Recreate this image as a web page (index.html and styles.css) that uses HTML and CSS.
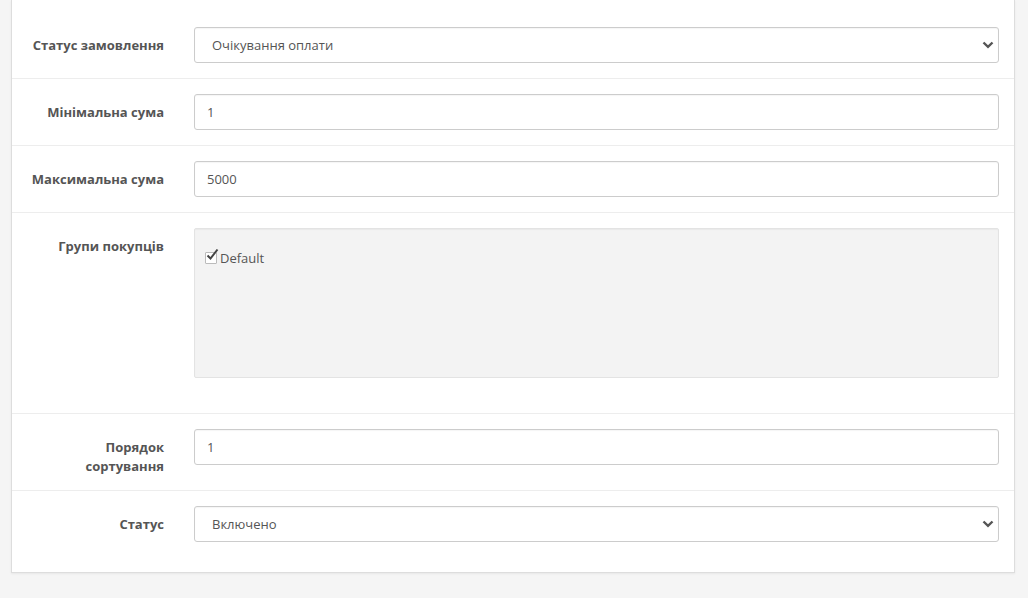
FILE: index.html
```html
<!DOCTYPE html>
<html lang="uk">
<head>
    <meta charset="UTF-8">
    <meta name="viewport" content="width=device-width, initial-scale=1.0">
    <title>Налаштування оплати</title>
    <link rel="stylesheet" href="styles.css">
</head>
<body>
    <div class="container">
        <div class="panel">
            <form class="form-horizontal">
                <div class="form-group">
                    <label class="control-label" for="order-status">Статус замовлення</label>
                    <div class="field select-wrap">
                        <select id="order-status" class="form-control">
                            <option>Очікування оплати</option>
                            <option>Обробка</option>
                            <option>Виконано</option>
                        </select>
                        <svg class="caret" width="12" height="8" viewBox="0 0 12 8"><path d="M1.5 1.5 L6 5.8 L10.5 1.5" fill="none" stroke="#555" stroke-width="2.4"/></svg>
                    </div>
                </div>
                <div class="form-group">
                    <label class="control-label" for="total-min">Мінімальна сума</label>
                    <div class="field">
                        <input type="text" id="total-min" class="form-control" value="1">
                    </div>
                </div>
                <div class="form-group">
                    <label class="control-label" for="total-max">Максимальна сума</label>
                    <div class="field">
                        <input type="text" id="total-max" class="form-control" value="5000">
                    </div>
                </div>
                <div class="form-group">
                    <label class="control-label">Групи покупців</label>
                    <div class="field">
                        <div class="well">
                            <div class="checkbox">
                                <label>
                                    <span class="check-box">
                                        <svg width="15" height="15" viewBox="0 0 15 15"><path d="M2.5 7.5 L5.5 10.5 L12.5 1.5" fill="none" stroke="#444" stroke-width="2"/></svg>
                                    </span>
                                    Default
                                </label>
                            </div>
                        </div>
                    </div>
                </div>
                <div class="form-group">
                    <label class="control-label" for="sort-order">Порядок<br>сортування</label>
                    <div class="field">
                        <input type="text" id="sort-order" class="form-control" value="1">
                    </div>
                </div>
                <div class="form-group">
                    <label class="control-label" for="status">Статус</label>
                    <div class="field select-wrap">
                        <select id="status" class="form-control">
                            <option>Включено</option>
                            <option>Відключено</option>
                        </select>
                        <svg class="caret" width="12" height="8" viewBox="0 0 12 8"><path d="M1.5 1.5 L6 5.8 L10.5 1.5" fill="none" stroke="#555" stroke-width="2.4"/></svg>
                    </div>
                </div>
            </form>
        </div>
    </div>
</body>
</html>
```

FILE: styles.css
```css
body {
    margin: 0;
    background-color: #f5f5f5;
    font-family: "Open Sans", "Liberation Sans", sans-serif;
    font-size: 13px;
    line-height: 1.42857;
    color: #555;
}
.container {
    padding: 0 13px 25px 11px;
}
.panel {
    background-color: #fff;
    border: 1px solid #ddd;
    border-top: none;
    box-shadow: 0 1px 2px rgba(0, 0, 0, 0.06);
    padding: 12px 0 15px 0;
}
.form-group {
    display: grid;
    grid-template-columns: 137px 1fr;
    column-gap: 30px;
    align-items: start;
    padding: 15px;
}
.form-group + .form-group {
    border-top: 1px solid #ededed;
}
.control-label {
    text-align: right;
    font-weight: bold;
    color: #555;
    padding-top: 9px;
}
.field {
    min-width: 0;
}
.form-control {
    display: block;
    box-sizing: border-box;
    width: 100%;
    height: 36px;
    padding: 0 12px;
    font-family: inherit;
    font-size: 13px;
    color: #555;
    background-color: #fff;
    border: 1px solid #ccc;
    border-radius: 3px;
    box-shadow: inset 0 1px 1px rgba(0, 0, 0, 0.04);
    outline: none;
}
select.form-control {
    appearance: none;
    -webkit-appearance: none;
    padding-left: 17px;
}
.select-wrap {
    position: relative;
}
.caret {
    position: absolute;
    right: 5px;
    top: 14px;
    pointer-events: none;
}
.well {
    box-sizing: border-box;
    height: 150px;
    padding: 9px;
    margin-bottom: 20px;
    background-color: #f3f3f3;
    border: 1px solid #e3e3e3;
    border-radius: 2px;
    box-shadow: inset 0 1px 1px rgba(0, 0, 0, 0.04);
}
.checkbox {
    margin-top: 10px;
}
.checkbox label {
    display: flex;
    align-items: center;
    line-height: 20px;
    color: #555;
}
.check-box {
    position: relative;
    box-sizing: border-box;
    width: 12px;
    height: 12px;
    margin: 0 3px 0 1px;
    background-color: #fff;
    border: 1px solid #bbb;
    border-radius: 1px;
}
.check-box svg {
    position: absolute;
    left: -1px;
    top: -5px;
}
```
